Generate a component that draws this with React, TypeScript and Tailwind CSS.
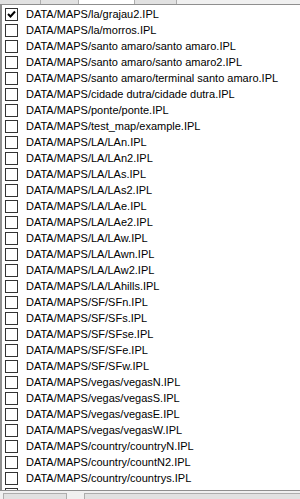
import React from "react"

const maps = [
  "DATA/MAPS/la/grajau2.IPL",
  "DATA/MAPS/la/morros.IPL",
  "DATA/MAPS/santo amaro/santo amaro.IPL",
  "DATA/MAPS/santo amaro/santo amaro2.IPL",
  "DATA/MAPS/santo amaro/terminal santo amaro.IPL",
  "DATA/MAPS/cidade dutra/cidade dutra.IPL",
  "DATA/MAPS/ponte/ponte.IPL",
  "DATA/MAPS/test_map/example.IPL",
  "DATA/MAPS/LA/LAn.IPL",
  "DATA/MAPS/LA/LAn2.IPL",
  "DATA/MAPS/LA/LAs.IPL",
  "DATA/MAPS/LA/LAs2.IPL",
  "DATA/MAPS/LA/LAe.IPL",
  "DATA/MAPS/LA/LAe2.IPL",
  "DATA/MAPS/LA/LAw.IPL",
  "DATA/MAPS/LA/LAwn.IPL",
  "DATA/MAPS/LA/LAw2.IPL",
  "DATA/MAPS/LA/LAhills.IPL",
  "DATA/MAPS/SF/SFn.IPL",
  "DATA/MAPS/SF/SFs.IPL",
  "DATA/MAPS/SF/SFse.IPL",
  "DATA/MAPS/SF/SFe.IPL",
  "DATA/MAPS/SF/SFw.IPL",
  "DATA/MAPS/vegas/vegasN.IPL",
  "DATA/MAPS/vegas/vegasS.IPL",
  "DATA/MAPS/vegas/vegasE.IPL",
  "DATA/MAPS/vegas/vegasW.IPL",
  "DATA/MAPS/country/countryN.IPL",
  "DATA/MAPS/country/countN2.IPL",
  "DATA/MAPS/country/countrys.IPL",
  "DATA/MAPS/country/countryE.IPL",
]

const Check = ({ checked }: { checked: boolean }) => (
  <div className="w-[13px] h-[13px] shrink-0 border border-[#333333] bg-white flex items-center justify-center">
    {checked && (
      <svg width="11" height="11" viewBox="0 0 11 11">
        <path d="M2 5 L4.5 7.5 L9 2.5" fill="none" stroke="#000" strokeWidth="2" />
      </svg>
    )}
  </div>
)

export default function App() {
  return (
    <div
      className="w-[300px] h-[499px] overflow-hidden bg-white flex flex-col text-[11px] text-black"
      style={{ fontFamily: '"Liberation Sans", Arial, sans-serif' }}
    >
      {/* bottom of the toolbar buttons above, cut off */}
      <div className="h-[4px] flex shrink-0">
        <div className="w-[41px] bg-[#e1e1e1] border-r border-[#adadad]" />
        <div className="w-[38px] bg-[#e1e1e1] border-r border-[#adadad]" />
        <div className="w-[56px] bg-white border-r border-[#adadad]" />
        <div className="w-[42px] bg-[#e1e1e1] border-r border-[#adadad]" />
        <div className="flex-1 bg-[#f0f0f0]" />
      </div>

      {/* checked list */}
      <div className="h-[487px] shrink-0 border-t border-b border-l-2 border-[#8f8f8f] overflow-hidden pt-[3px]">
        {maps.map((m, i) => (
          <div key={m} className="h-[16px] flex items-start pl-[3px]">
            <Check checked={i === 0} />
            <span className="ml-[8px] leading-[13px] whitespace-nowrap">{m}</span>
          </div>
        ))}
      </div>

      {/* buttons below, cut off */}
      <div className="flex-1 bg-[#f0f0f0] flex items-end gap-[17px] pl-[3px]">
        <div className="w-[64px] h-[6px] border-t border-l border-r border-[#adadad] bg-[#e1e1e1]" />
        <div className="flex-1 h-[6px] border-t border-l border-[#adadad] bg-[#e1e1e1]" />
      </div>
    </div>
  )
}
